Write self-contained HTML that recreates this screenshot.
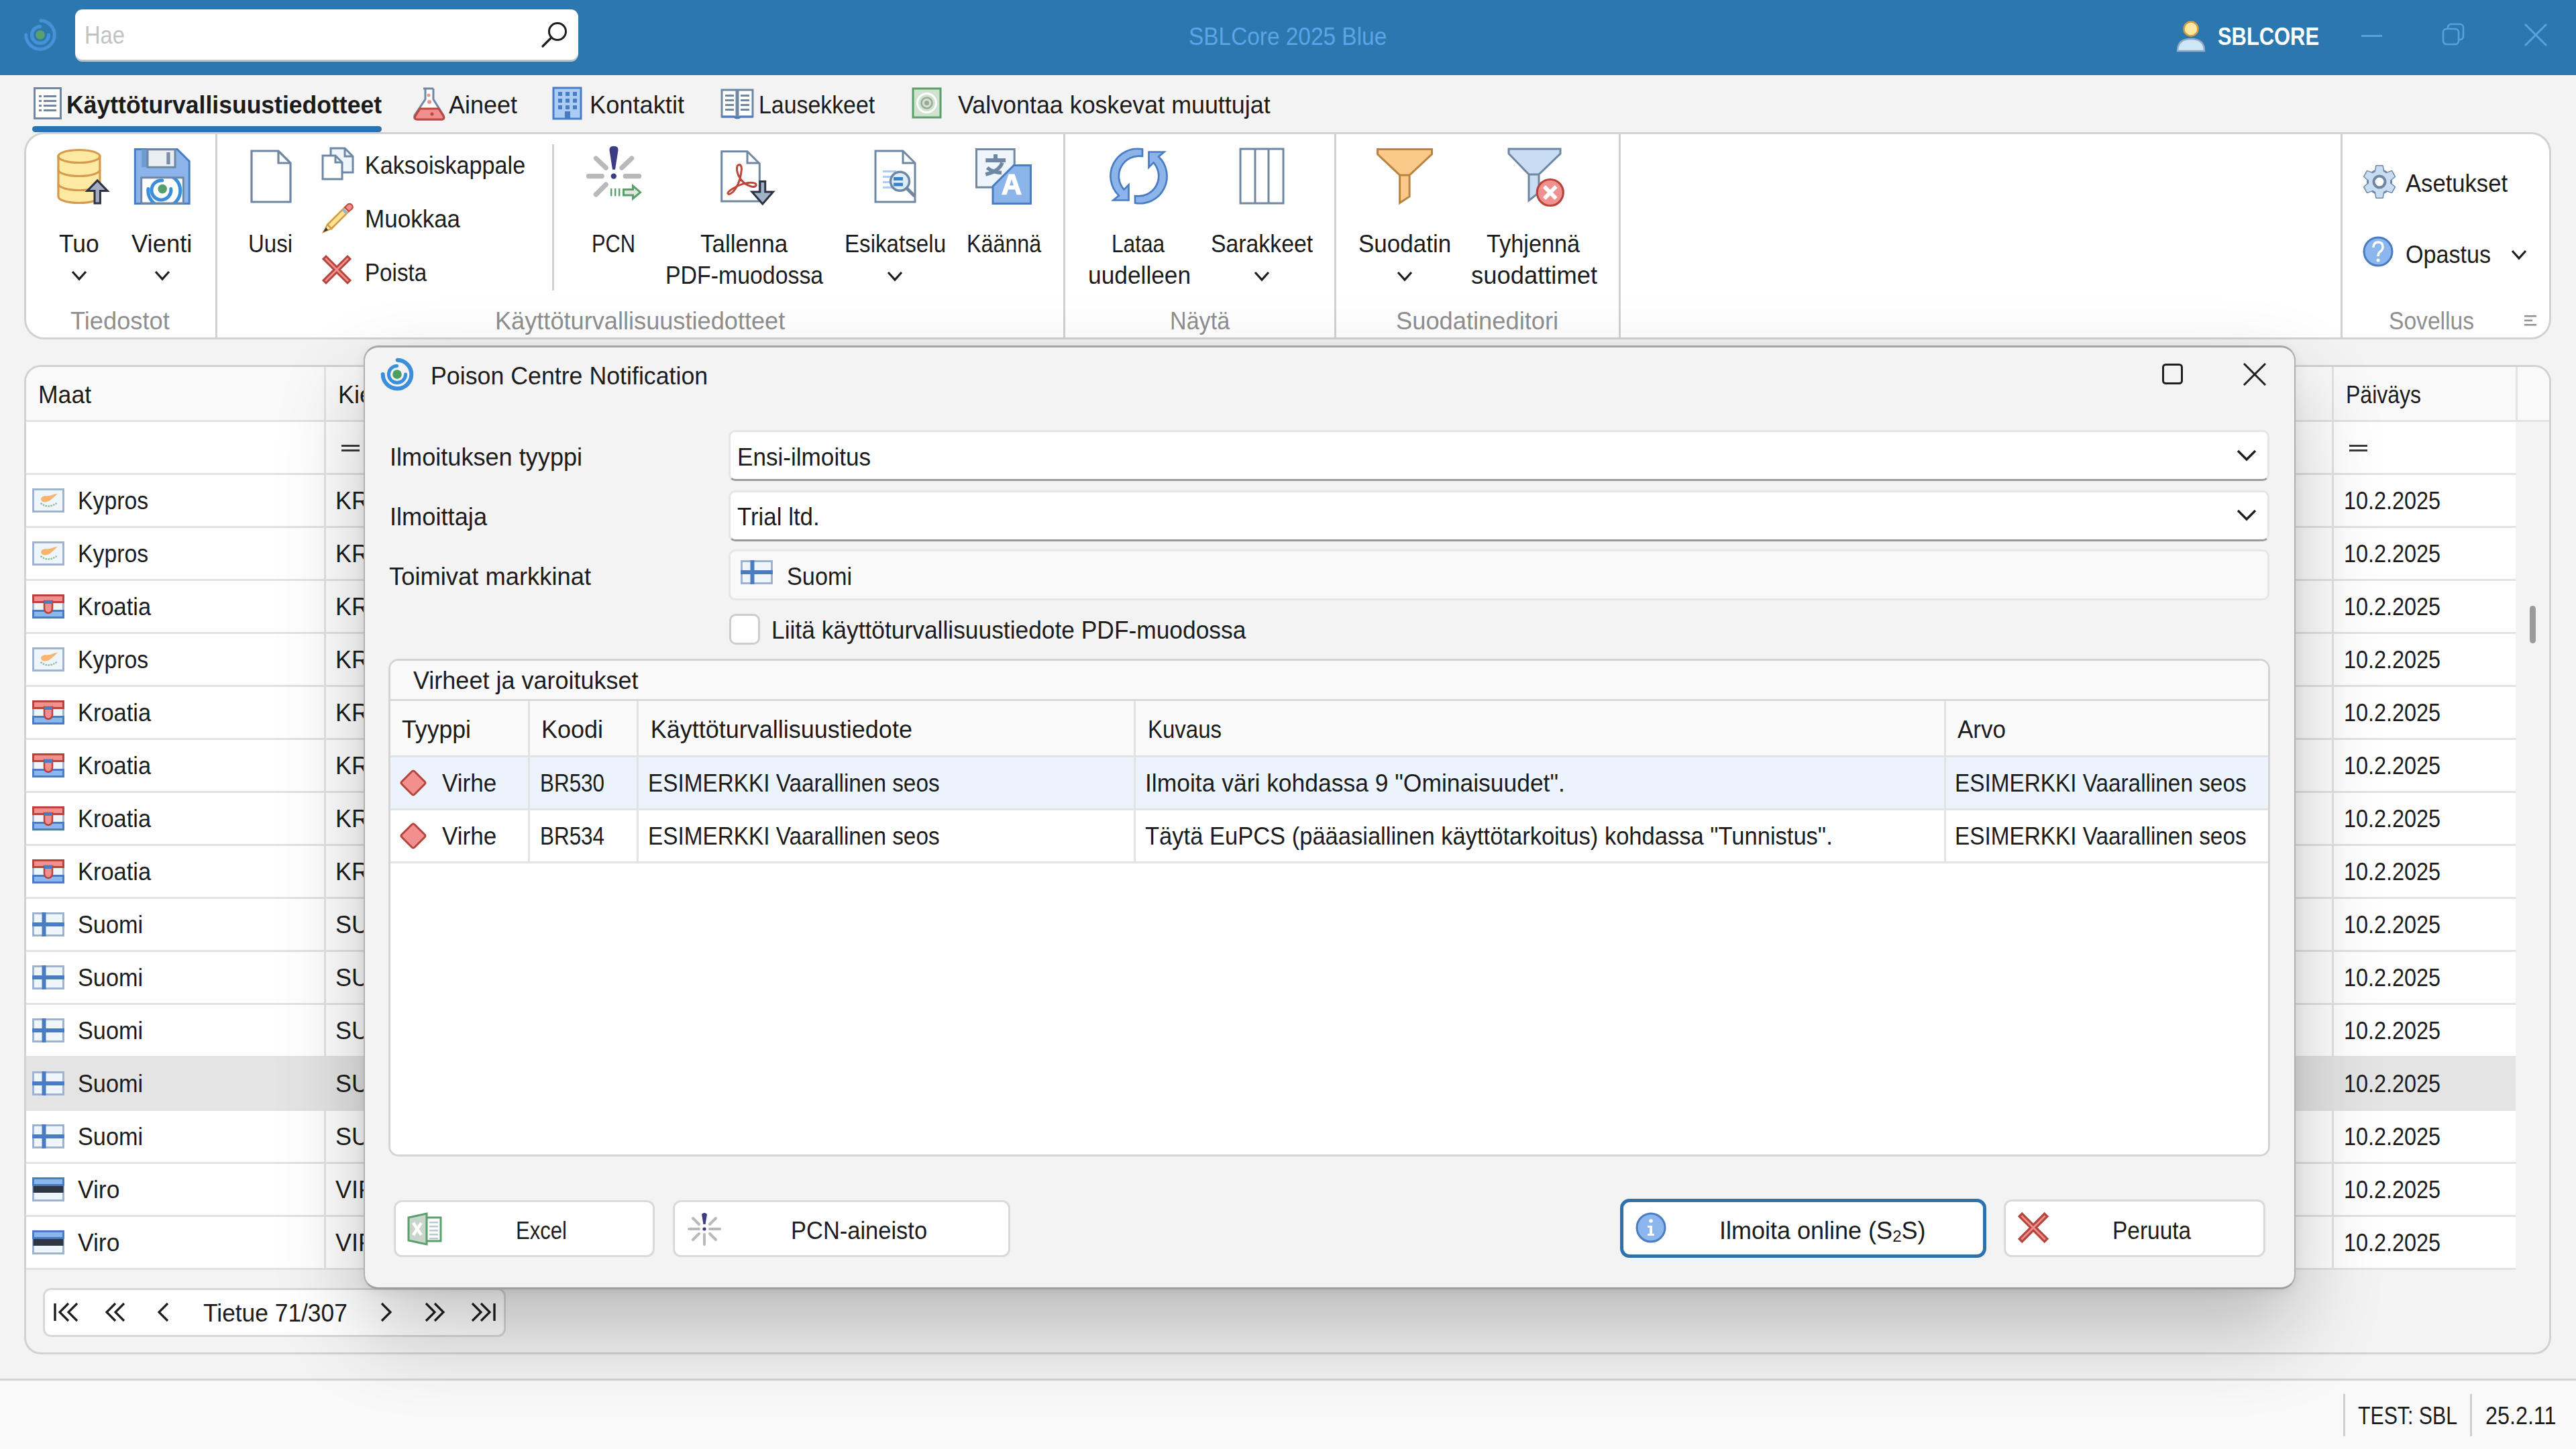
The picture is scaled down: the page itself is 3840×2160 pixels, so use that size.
<!DOCTYPE html><html><head><meta charset="utf-8"><style>
*{margin:0;padding:0;box-sizing:border-box}
html,body{width:3840px;height:2160px;overflow:hidden;background:#f3f3f3;font-family:"Liberation Sans",sans-serif}
.t{position:absolute;white-space:nowrap;line-height:1;transform-origin:0 0}
.r{position:absolute}
.s{position:absolute;overflow:visible}
</style></head><body><div class="r" style="left:0px;top:0px;width:3840px;height:112px;background:#2c78ae;"></div>
<svg class="s" style="left:0px;top:0px;" width="120" height="112" viewBox="0 0 120 112"><g opacity="1.0"><path d="M60.7 30.7 A21.3 21.3 0 1 1 38.7 52.0" fill="none" stroke="#4592d8" stroke-width="5" stroke-linecap="round"/><path d="M72.6 52.0 A12.6 12.6 0 1 1 59.6 39.4" fill="none" stroke="#4592d8" stroke-width="5" stroke-linecap="round"/><circle cx="60" cy="52" r="6.8" fill="#5aa06a"/></g></svg>
<div class="r" style="left:112px;top:14px;width:750px;height:75px;background:#ffffff;border-radius:11px;box-shadow:0 3px 0 #b9c3cc;"></div>
<div class="t" style="left:126.0px;top:33.7px;font-size:37px;color:#c2c2c2;transform:scaleX(0.8824);">Hae</div>
<svg class="s" style="left:800px;top:28px;" width="56" height="50" viewBox="0 0 56 50"><circle cx="31" cy="19" r="12.5" fill="none" stroke="#1f1f1f" stroke-width="3"/><line x1="22" y1="28" x2="9" y2="41" stroke="#1f1f1f" stroke-width="3.2" stroke-linecap="round"/></svg>
<div class="t" style="left:1772.0px;top:36.5px;font-size:36px;color:#5ba4e8;transform:scaleX(0.9277);">SBLCore 2025 Blue</div>
<svg class="s" style="left:3240px;top:28px;" width="52" height="52" viewBox="0 0 52 52"><circle cx="26" cy="15" r="10.5" fill="#fde9a0" stroke="#d49a45" stroke-width="2.5"/><path d="M6 48 Q6 30 26 30 Q46 30 46 48 Z" fill="#cfe6f7" stroke="#8fa9c8" stroke-width="2.5"/></svg>
<div class="t" style="left:3306.0px;top:36.5px;font-size:36px;color:#ffffff;font-weight:700;transform:scaleX(0.8580);">SBLCORE</div>
<div class="r" style="left:3520px;top:52px;width:31px;height:3px;background:#5aa0e0;"></div>
<svg class="s" style="left:3640px;top:34px;" width="36" height="36" viewBox="0 0 36 36"><rect x="2" y="9" width="23" height="23" rx="5" fill="none" stroke="#5aa0e0" stroke-width="2.6"/><path d="M9 9 V7 a5 5 0 0 1 5 -5 H27 a5 5 0 0 1 5 5 V20 a5 5 0 0 1 -5 5 H25" fill="none" stroke="#5aa0e0" stroke-width="2.6"/></svg>
<svg class="s" style="left:3762px;top:34px;" width="36" height="36" viewBox="0 0 36 36"><path d="M2 2 L34 34 M34 2 L2 34" stroke="#5aa0e0" stroke-width="3"/></svg>
<svg class="s" style="left:48px;top:128px;" width="48" height="52" viewBox="0 0 48 52"><rect x="3.5" y="3.5" width="39" height="45" fill="#fff" stroke="#6f87a3" stroke-width="3"/><g fill="#6f87a3"><rect x="10" y="14" width="4" height="3"/><rect x="17" y="14" width="19" height="3"/><rect x="10" y="21" width="4" height="3"/><rect x="17" y="21" width="19" height="3"/><rect x="10" y="28" width="4" height="3"/><rect x="17" y="28" width="19" height="3"/><rect x="10" y="35" width="4" height="3"/><rect x="17" y="35" width="19" height="3"/></g></svg>
<div class="t" style="left:99.0px;top:138.5px;font-size:36px;color:#1b1b1b;font-weight:700;transform:scaleX(0.9874);">Käyttöturvallisuustiedotteet</div>
<div class="r" style="left:48px;top:188px;width:521px;height:9px;background:#2c72ae;border-radius:5px"></div>
<svg class="s" style="left:612px;top:128px;" width="56" height="54" viewBox="0 0 56 54"><path d="M19 4 H34 M22 4 V20 L6 44 Q4 50 10 50 H46 Q52 50 49 44 L34 20 V4" fill="#fff" stroke="#6f87a3" stroke-width="3"/><path d="M14 34 H42 L49 45 Q51 50 46 50 H10 Q5 50 7 45 Z" fill="#f08f8f" stroke="#c0453a" stroke-width="3"/><circle cx="27" cy="14" r="2.5" fill="#f08f8f"/><circle cx="28" cy="24" r="3" fill="#f08f8f"/><circle cx="32" cy="42" r="2.5" fill="#c0453a"/></svg>
<div class="t" style="left:669.0px;top:138.5px;font-size:36px;color:#1b1b1b;">Aineet</div>
<svg class="s" style="left:822px;top:128px;" width="48" height="52" viewBox="0 0 48 52"><rect x="3" y="3" width="41" height="46" fill="#a9cdf5" stroke="#4a7cc4" stroke-width="3"/><g fill="#4a7cc4"><rect x="10" y="9" width="6" height="6"/><rect x="21" y="9" width="6" height="6"/><rect x="32" y="9" width="6" height="6"/><rect x="10" y="19" width="6" height="6"/><rect x="21" y="19" width="6" height="6"/><rect x="32" y="19" width="6" height="6"/><rect x="10" y="29" width="6" height="6"/><rect x="21" y="29" width="6" height="6"/><rect x="32" y="29" width="6" height="6"/><rect x="20" y="38" width="8" height="11"/></g></svg>
<div class="t" style="left:879.0px;top:138.5px;font-size:36px;color:#1b1b1b;transform:scaleX(1.0071);">Kontaktit</div>
<svg class="s" style="left:1072px;top:130px;" width="56" height="50" viewBox="0 0 56 50"><path d="M4 4 H26 V44 H4 Z M28 4 H50 V44 H28 Z" fill="#fff" stroke="#6f87a3" stroke-width="3"/><path d="M4 44 H22 Q27 48 32 44 H50" fill="none" stroke="#4a7cc4" stroke-width="3"/><g fill="#6f87a3"><rect x="9" y="11" width="13" height="3"/><rect x="9" y="18" width="13" height="3"/><rect x="9" y="25" width="13" height="3"/><rect x="9" y="32" width="13" height="3"/><rect x="32" y="11" width="13" height="3"/><rect x="32" y="18" width="13" height="3"/><rect x="32" y="25" width="13" height="3"/><rect x="32" y="32" width="13" height="3"/></g></svg>
<div class="t" style="left:1131.0px;top:138.5px;font-size:36px;color:#1b1b1b;transform:scaleX(0.9402);">Lausekkeet</div>
<svg class="s" style="left:1358px;top:128px;" width="48" height="52" viewBox="0 0 48 52"><rect x="3" y="4" width="41" height="43" fill="#cfe3cf" stroke="#5aa06a" stroke-width="3"/><circle cx="23.5" cy="25.5" r="14" fill="none" stroke="#fff" stroke-width="3"/><circle cx="23.5" cy="25.5" r="8" fill="none" stroke="#9aa89a" stroke-width="2.5"/><circle cx="23.5" cy="25.5" r="3.5" fill="#9aa89a"/></svg>
<div class="t" style="left:1428.0px;top:138.5px;font-size:36px;color:#1b1b1b;transform:scaleX(0.9957);">Valvontaa koskevat muuttujat</div>
<div class="r" style="left:36px;top:197px;width:3767px;height:309px;background:#ffffff;border:3px solid #d2d2d2;border-radius:30px"></div>
<div class="r" style="left:321px;top:199px;width:3px;height:305px;background:#d2d2d2;"></div>
<div class="r" style="left:1585px;top:199px;width:3px;height:305px;background:#d2d2d2;"></div>
<div class="r" style="left:1989px;top:199px;width:3px;height:305px;background:#d2d2d2;"></div>
<div class="r" style="left:2413px;top:199px;width:3px;height:305px;background:#d2d2d2;"></div>
<div class="r" style="left:3489px;top:199px;width:3px;height:305px;background:#d2d2d2;"></div>
<div class="r" style="left:823px;top:215px;width:3px;height:218px;background:#d2d2d2;"></div>
<svg class="s" style="left:80px;top:214px;" width="90" height="96" viewBox="0 0 90 96"><g stroke="#d79a4c" stroke-width="3.2" fill="#fee9a3">
<path d="M6.9 19 V79 A31 9.5 0 0 0 68.9 79 V19 Z"/>
<ellipse cx="37.9" cy="19" rx="31" ry="9.5"/></g>
<g stroke="#d79a4c" stroke-width="3.2" fill="none"><path d="M6.9 39 A31 9.5 0 0 0 68.9 39"/><path d="M6.9 60 A31 9.5 0 0 0 68.9 60"/></g>
<path d="M65.2 55 L80.3 70.6 H69.4 V89 H61 V70.6 H50 Z" fill="#a3adbf" stroke="#2b3242" stroke-width="3"/></svg>
<div class="t" style="left:88.0px;top:345.5px;font-size:36px;color:#1c1c1c;transform:scaleX(0.9836);">Tuo</div>
<svg class="s" style="left:105.0px;top:401.5px;" width="26" height="17" viewBox="0 0 26 17"><path d="M3 3 L13.0 14 L23 3" fill="none" stroke="#1f1f1f" stroke-width="3.2"/></svg>
<svg class="s" style="left:80px;top:214px;" width="210" height="96" viewBox="0 0 210 96"><defs><clipPath id="flc"><rect x="132" y="52" width="60" height="36"/></clipPath></defs>
<path d="M121.3 8.4 H184.2 L202.2 26.4 V89.4 H121.3 Z" fill="#8ab4ea" stroke="#4a7cc4" stroke-width="3"/>
<rect x="131" y="8.8" width="8" height="26.5" fill="#6f9bd0"/>
<rect x="140" y="8.8" width="41" height="26.5" fill="#e8eef2" stroke="#6f87a3" stroke-width="3"/>
<rect x="168.3" y="13" width="5.3" height="18" fill="#7a8ea8"/>
<rect x="130.7" y="50.8" width="62.6" height="38.2" fill="#fff" stroke="#6f87a3" stroke-width="3"/>
<g clip-path="url(#flc)"><g opacity="1.0"><path d="M162.9 46.3 A24 24 0 1 1 140.9 67.6" fill="none" stroke="#3a8edb" stroke-width="5" stroke-linecap="round"/><path d="M174.8 67.6 A14.5 14.5 0 1 1 161.8 55.0" fill="none" stroke="#3a8edb" stroke-width="5" stroke-linecap="round"/><circle cx="162.2" cy="67.6" r="6.8" fill="#55a06a"/></g></g></svg>
<div class="t" style="left:196.0px;top:345.5px;font-size:36px;color:#1c1c1c;transform:scaleX(1.0112);">Vienti</div>
<svg class="s" style="left:229.0px;top:401.5px;" width="26" height="17" viewBox="0 0 26 17"><path d="M3 3 L13.0 14 L23 3" fill="none" stroke="#1f1f1f" stroke-width="3.2"/></svg>
<svg class="s" style="left:372px;top:222px;" width="64" height="84" viewBox="0 0 64 84"><path d="M3 3 H43 L61 21 V79 H3 Z" fill="#fff" stroke="#6f87a3" stroke-width="3.2"/><path d="M43 3 V21 H61" fill="none" stroke="#6f87a3" stroke-width="3.2"/></svg>
<div class="t" style="left:370.0px;top:345.5px;font-size:36px;color:#1c1c1c;transform:scaleX(0.9167);">Uusi</div>
<svg class="s" style="left:478px;top:218px;" width="52" height="52" viewBox="0 0 52 52"><path d="M15 3 H36 L48 15 V39 H15 Z" fill="#eef5fb" stroke="#6f87a3" stroke-width="3"/><path d="M36 3 V15 H48" fill="none" stroke="#6f87a3" stroke-width="3"/><path d="M3 14 H22 L32 24 V49 H3 Z" fill="#fff" stroke="#6f87a3" stroke-width="3"/><path d="M22 14 V24 H32" fill="none" stroke="#6f87a3" stroke-width="3"/></svg>
<div class="t" style="left:544.0px;top:229.0px;font-size:36px;color:#1c1c1c;transform:scaleX(0.9484);">Kaksoiskappale</div>
<svg class="s" style="left:478px;top:300px;" width="50" height="50" viewBox="0 0 50 50"><path d="M10 35 L36 9 L42 15 L16 41 Z" fill="#fde28f" stroke="#d39a3c" stroke-width="2.5"/><path d="M36 9 L40 5 Q44 2 47 6 Q49 9 46 12 L42 15 Z" fill="#f08f8f" stroke="#c0453a" stroke-width="2"/><path d="M33 12 L39 18" stroke="#9ab3cf" stroke-width="4"/><path d="M10 35 L4 46 L16 41 Z" fill="#fbe3b5" stroke="#d39a3c" stroke-width="2"/><path d="M4 46 L8 39 L11 43 Z" fill="#2b3242"/></svg>
<div class="t" style="left:544.0px;top:308.5px;font-size:36px;color:#1c1c1c;transform:scaleX(0.9728);">Muokkaa</div>
<svg class="s" style="left:480px;top:380px;" width="46" height="46" viewBox="0 0 46 46"><g transform="scale(1.0)"><path d="M6 2 L22 18 L38 2 L42 6 L26 22 L42 38 L38 42 L22 26 L6 42 L2 38 L18 22 L2 6 Z" fill="#ef8f8f" stroke="#b8433a" stroke-width="3" stroke-linejoin="miter"/></g></svg>
<div class="t" style="left:544.0px;top:388.5px;font-size:36px;color:#1c1c1c;transform:scaleX(0.9208);">Poista</div>
<svg class="s" style="left:860px;top:210px;" width="110" height="100" viewBox="0 0 110 100"><g stroke="#b9b9bd" stroke-width="7.2" stroke-linecap="round">
<line x1="28.4" y1="26" x2="43.2" y2="40.2"/><line x1="81.7" y1="26" x2="66.9" y2="40.2"/>
<line x1="17.4" y1="52.6" x2="37.3" y2="52.6"/><line x1="72.2" y1="52.6" x2="92.7" y2="52.6"/>
<line x1="43.2" y1="65.1" x2="28.4" y2="79.9"/></g>
<path d="M48.5 14 Q48 7.8 55 7.8 Q62 7.8 61.5 14 L57 42.7 H53 Z" fill="#3b3b86"/><circle cx="54.8" cy="52.6" r="4.2" fill="#3b3b86"/>
<g fill="#5aa06a"><rect x="50" y="71" width="2.4" height="11.4"/><rect x="56" y="71" width="2.4" height="11.4"/><rect x="62" y="71" width="2.4" height="11.4"/></g>
<path d="M69.5 72.5 H83.5 V67 L94.5 76.7 L83.5 86 V81 H69.5 Z" fill="#dfe9df" stroke="#5aa06a" stroke-width="3"/></svg>
<div class="t" style="left:882.0px;top:345.5px;font-size:36px;color:#1c1c1c;transform:scaleX(0.8553);">PCN</div>
<svg class="s" style="left:1060px;top:210px;" width="110" height="100" viewBox="0 0 110 100"><path d="M15.7 15.7 H54 L72.3 34 V90 H15.7 Z" fill="#fff" stroke="#6f87a3" stroke-width="3"/><path d="M54 15.7 V33 H72.3" fill="none" stroke="#6f87a3" stroke-width="3"/>
<path d="M41.9 35.5 C37 35.5 38 46 41 52 C45 60 52 66 60 68 C66 70 69 66 66 63.5 C62 61 50 62 40 67 C32 71 24 76 25 78.5 C26 81 32 78 36 72 C40 66 44 55 45 46 C46 40 45 35.5 41.9 35.5 Z" fill="none" stroke="#c0453a" stroke-width="3"/>
<path d="M72.9 60.5 H80.7 V76 H92.5 L76.8 94 L61 76 H72.9 Z" fill="#a4b2c8" stroke="#2b3242" stroke-width="3"/></svg>
<div class="t" style="left:1044.0px;top:345.5px;font-size:36px;color:#1c1c1c;transform:scaleX(0.9704);">Tallenna</div>
<div class="t" style="left:992.0px;top:393.0px;font-size:36px;color:#1c1c1c;transform:scaleX(0.9402);">PDF-muodossa</div>
<svg class="s" style="left:1302px;top:222px;" width="66" height="84" viewBox="0 0 66 84"><path d="M3 3 H44 L62 21 V79 H3 Z" fill="#fff" stroke="#6f87a3" stroke-width="3"/><path d="M44 3 V21 H62" fill="none" stroke="#6f87a3" stroke-width="3"/>
<g fill="#a9cdf5"><rect x="14" y="32" width="20" height="3"/><rect x="14" y="40" width="20" height="3"/><rect x="14" y="48" width="20" height="3"/><rect x="14" y="56" width="20" height="3"/></g>
<circle cx="39.5" cy="48.3" r="14" fill="#ddeefa" stroke="#6f87a3" stroke-width="3.5"/>
<rect x="30" y="42" width="14" height="5" fill="#3a7ec4"/><rect x="30" y="50.5" width="14" height="5" fill="#3a7ec4"/>
<line x1="50" y1="59" x2="60" y2="69" stroke="#6f87a3" stroke-width="5" stroke-linecap="round"/></svg>
<div class="t" style="left:1259.0px;top:345.5px;font-size:36px;color:#1c1c1c;transform:scaleX(0.9207);">Esikatselu</div>
<svg class="s" style="left:1321.0px;top:402.5px;" width="26" height="17" viewBox="0 0 26 17"><path d="M3 3 L13.0 14 L23 3" fill="none" stroke="#1f1f1f" stroke-width="3.2"/></svg>
<svg class="s" style="left:1452px;top:219px;" width="88" height="88" viewBox="0 0 88 88"><rect x="3.5" y="3.5" width="56.7" height="56.7" fill="#eef6fb" stroke="#6f87a3" stroke-width="3"/>
<g fill="#6f87a3"><rect x="29" y="11" width="6" height="7"/><rect x="17.3" y="17" width="29.7" height="6"/></g>
<g stroke="#6f87a3" stroke-width="5.5" fill="none"><path d="M42 23.5 Q38 36 17.3 41"/><path d="M19.5 31 Q28 38 41 38.5"/></g>
<path d="M59.2 27.5 H84.5 V84.5 H28 V58.7 Z" fill="#8ab4ea" stroke="#4a7cc4" stroke-width="3"/>
<path d="M41 71.3 L51.5 40.5 H60.5 L71 71.3 H63.5 L61 63.5 H51 L48.5 71.3 Z M53 57.5 H59 L56 48 Z" fill="#fff" fill-rule="evenodd"/></svg>
<div class="t" style="left:1441.0px;top:345.5px;font-size:36px;color:#1c1c1c;transform:scaleX(0.8960);">Käännä</div>
<div class="t" style="left:105.0px;top:460.5px;font-size:36px;color:#8f8f8f;transform:scaleX(1.0068);">Tiedostot</div>
<div class="t" style="left:738.0px;top:460.5px;font-size:36px;color:#8f8f8f;transform:scaleX(1.0047);">Käyttöturvallisuustiedotteet</div>
<svg class="s" style="left:1650px;top:214px;" width="96" height="96" viewBox="0 0 96 96"><g fill="#8ab4ea" stroke="#4a7cc4" stroke-width="2.7" stroke-linejoin="miter"><path d="M53 8.4 A40.5 40.5 0 0 0 17.9 77.5 L9.6 84.5 L32.5 84.5 L32.5 61.6 L25.5 68.6 A30 30 0 0 1 53 19 Z"/><path d="M42 88.6 A40.5 40.5 0 0 0 77.1 19.5 L85.4 12.5 L62.5 12.5 L62.5 35.4 L69.5 28.4 A30 30 0 0 1 42 78 Z"/></g></svg>
<div class="t" style="left:1657.0px;top:345.5px;font-size:36px;color:#1c1c1c;transform:scaleX(0.8791);">Lataa</div>
<div class="t" style="left:1622.0px;top:393.0px;font-size:36px;color:#1c1c1c;transform:scaleX(0.9808);">uudelleen</div>
<svg class="s" style="left:1846px;top:219px;" width="70" height="88" viewBox="0 0 70 88"><rect x="3" y="3" width="64" height="81" fill="#fff" stroke="#6f87a3" stroke-width="3"/><line x1="25" y1="3" x2="25" y2="84" stroke="#6f87a3" stroke-width="3"/><line x1="45" y1="3" x2="45" y2="84" stroke="#6f87a3" stroke-width="3"/></svg>
<div class="t" style="left:1805.0px;top:345.5px;font-size:36px;color:#1c1c1c;transform:scaleX(0.9383);">Sarakkeet</div>
<svg class="s" style="left:1868.0px;top:402.5px;" width="26" height="17" viewBox="0 0 26 17"><path d="M3 3 L13.0 14 L23 3" fill="none" stroke="#1f1f1f" stroke-width="3.2"/></svg>
<svg class="s" style="left:2050px;top:219px;" width="88" height="88" viewBox="0 0 88 88"><path d="M3.5 3.5 H84.5 V10.9 L51.1 42.1 V74 L36.6 83.5 V42.1 L3.5 10.9 Z" fill="#fbc98a" stroke="#b98340" stroke-width="3"/><path d="M36.6 42.1 H51.1" stroke="#b98340" stroke-width="3"/></svg>
<div class="t" style="left:2025.0px;top:345.5px;font-size:36px;color:#1c1c1c;transform:scaleX(0.9718);">Suodatin</div>
<svg class="s" style="left:2081.0px;top:402.5px;" width="26" height="17" viewBox="0 0 26 17"><path d="M3 3 L13.0 14 L23 3" fill="none" stroke="#1f1f1f" stroke-width="3.2"/></svg>
<svg class="s" style="left:2246px;top:219px;" width="90" height="90" viewBox="0 0 90 90"><path d="M3 3 H80 V10 L48 41 V68 L33 80 V41 L3 10 Z" fill="#c8dcf2" stroke="#6f87a3" stroke-width="3"/><path d="M33 41 H48" stroke="#6f87a3" stroke-width="3"/><circle cx="64.8" cy="68" r="19.5" fill="#f29090" stroke="#b8433a" stroke-width="3.2"/><path d="M56 59 L73.6 77 M73.6 59 L56 77" stroke="#fff" stroke-width="6"/></svg>
<div class="t" style="left:2216.0px;top:345.5px;font-size:36px;color:#1c1c1c;transform:scaleX(0.9524);">Tyhjennä</div>
<div class="t" style="left:2193.0px;top:393.0px;font-size:36px;color:#1c1c1c;transform:scaleX(1.0108);">suodattimet</div>
<div class="t" style="left:1744.0px;top:460.5px;font-size:36px;color:#8f8f8f;transform:scaleX(0.9474);">Näytä</div>
<div class="t" style="left:2081.0px;top:460.5px;font-size:36px;color:#8f8f8f;transform:scaleX(1.0083);">Suodatineditori</div>
<svg class="s" style="left:3522px;top:246px;" width="50" height="52" viewBox="0 0 50 52"><g transform="translate(25,25)"><g fill="#c8dcf2" stroke="#6f87a3" stroke-width="3" stroke-linejoin="round"><path d="M-4.5 -23.5 H4.5 L6 -15 H-6 Z" transform="rotate(0)"/><path d="M-4.5 -23.5 H4.5 L6 -15 H-6 Z" transform="rotate(60)"/><path d="M-4.5 -23.5 H4.5 L6 -15 H-6 Z" transform="rotate(120)"/><path d="M-4.5 -23.5 H4.5 L6 -15 H-6 Z" transform="rotate(180)"/><path d="M-4.5 -23.5 H4.5 L6 -15 H-6 Z" transform="rotate(240)"/><path d="M-4.5 -23.5 H4.5 L6 -15 H-6 Z" transform="rotate(300)"/><circle r="17.5"/></g><g fill="#c8dcf2"><path d="M-4.5 -23.5 H4.5 L6 -15 H-6 Z" transform="rotate(0)"/><path d="M-4.5 -23.5 H4.5 L6 -15 H-6 Z" transform="rotate(60)"/><path d="M-4.5 -23.5 H4.5 L6 -15 H-6 Z" transform="rotate(120)"/><path d="M-4.5 -23.5 H4.5 L6 -15 H-6 Z" transform="rotate(180)"/><path d="M-4.5 -23.5 H4.5 L6 -15 H-6 Z" transform="rotate(240)"/><path d="M-4.5 -23.5 H4.5 L6 -15 H-6 Z" transform="rotate(300)"/></g><circle r="16" fill="#c8dcf2"/><circle r="8.5" fill="#fff" stroke="#6f87a3" stroke-width="4"/></g></svg>
<div class="t" style="left:3586.0px;top:255.5px;font-size:36px;color:#1c1c1c;transform:scaleX(0.9620);">Asetukset</div>
<svg class="s" style="left:3521px;top:351px;" width="48" height="48" viewBox="0 0 48 48"><circle cx="24" cy="24" r="21" fill="#8bb6ee" stroke="#4a7cc4" stroke-width="3"/><path d="M17 18 Q17 10 24 10 Q31 10 31 17 Q31 22 26 25 Q24 27 24 31" fill="none" stroke="#fff" stroke-width="3.5"/><circle cx="24" cy="37" r="2.5" fill="#fff"/></svg>
<div class="t" style="left:3586.0px;top:361.5px;font-size:36px;color:#1c1c1c;transform:scaleX(0.9478);">Opastus</div>
<svg class="s" style="left:3742.0px;top:370.5px;" width="26" height="17" viewBox="0 0 26 17"><path d="M3 3 L13.0 14 L23 3" fill="none" stroke="#1f1f1f" stroke-width="3.2"/></svg>
<div class="t" style="left:3561.0px;top:461.0px;font-size:36px;color:#8f8f8f;transform:scaleX(0.9338);">Sovellus</div>
<svg class="s" style="left:3761px;top:468px;" width="22" height="20" viewBox="0 0 22 20"><g fill="#8f8f8f"><rect x="2" y="2" width="18" height="2.5"/><rect x="2" y="8.5" width="12" height="2.5"/><rect x="2" y="15" width="18" height="2.5"/></g></svg>
<div class="r" style="left:36px;top:544px;width:3767px;height:1475px;background:#f3f3f3;border:3px solid #d2d2d2;border-radius:25px"></div>
<div class="r" style="left:39px;top:547px;width:3761px;height:80px;background:#f9f9f9;border-radius:22px 22px 0 0"></div>
<div class="r" style="left:39px;top:626px;width:3711px;height:3px;background:#e3e3e3;"></div>
<div class="r" style="left:3750px;top:626px;width:50px;height:3px;background:#e3e3e3;"></div>
<div class="r" style="left:39px;top:629px;width:3711px;height:76px;background:#ffffff;"></div>
<div class="r" style="left:39px;top:705px;width:3711px;height:3px;background:#e3e3e3;"></div>
<div class="r" style="left:39px;top:708px;width:3711px;height:76px;background:#ffffff;"></div>
<div class="r" style="left:39px;top:784px;width:3711px;height:3px;background:#e3e3e3;"></div>
<svg class="s" style="left:48px;top:728px;" width="48" height="36" viewBox="0 0 48 36"><rect x="1.5" y="1.5" width="45" height="33" fill="#eef6fb" stroke="#9fb2d0" stroke-width="3"/><path d="M13 15.5 Q15 10.5 22 11.5 Q29 10.5 32 9 L38 7.5 Q34 12 30 15 Q26 19.5 20 20.5 Q13.5 21 13 15.5 Z" fill="#f6b46e"/><path d="M12.5 22 Q24 31 36.5 22" fill="none" stroke="#8fb89a" stroke-width="2.4" stroke-dasharray="2.5 1.5"/></svg>
<div class="t" style="left:116.0px;top:729.0px;font-size:36px;color:#1c1c1c;transform:scaleX(0.9375);">Kypros</div>
<div class="t" style="left:500.0px;top:729.0px;font-size:36px;color:#1c1c1c;">KREIKKA</div>
<div class="t" style="left:3494.0px;top:728.5px;font-size:36px;color:#1c1c1c;transform:scaleX(0.9000);">10.2.2025</div>
<div class="r" style="left:39px;top:787px;width:3711px;height:76px;background:#ffffff;"></div>
<div class="r" style="left:39px;top:863px;width:3711px;height:3px;background:#e3e3e3;"></div>
<svg class="s" style="left:48px;top:807px;" width="48" height="36" viewBox="0 0 48 36"><rect x="1.5" y="1.5" width="45" height="33" fill="#eef6fb" stroke="#9fb2d0" stroke-width="3"/><path d="M13 15.5 Q15 10.5 22 11.5 Q29 10.5 32 9 L38 7.5 Q34 12 30 15 Q26 19.5 20 20.5 Q13.5 21 13 15.5 Z" fill="#f6b46e"/><path d="M12.5 22 Q24 31 36.5 22" fill="none" stroke="#8fb89a" stroke-width="2.4" stroke-dasharray="2.5 1.5"/></svg>
<div class="t" style="left:116.0px;top:808.0px;font-size:36px;color:#1c1c1c;transform:scaleX(0.9375);">Kypros</div>
<div class="t" style="left:500.0px;top:808.0px;font-size:36px;color:#1c1c1c;">KREIKKA</div>
<div class="t" style="left:3494.0px;top:807.5px;font-size:36px;color:#1c1c1c;transform:scaleX(0.9000);">10.2.2025</div>
<div class="r" style="left:39px;top:866px;width:3711px;height:76px;background:#ffffff;"></div>
<div class="r" style="left:39px;top:942px;width:3711px;height:3px;background:#e3e3e3;"></div>
<svg class="s" style="left:48px;top:886px;" width="48" height="36" viewBox="0 0 48 36"><rect x="1.5" y="1.5" width="45" height="33" fill="#eef6fb" stroke="#9fb2d0" stroke-width="3"/><rect x="1.5" y="1.5" width="45" height="10" fill="#f29090" stroke="#b8433a" stroke-width="3"/><rect x="1.5" y="24.5" width="45" height="10" fill="#8bb6ee" stroke="#4a7cc4" stroke-width="3"/><path d="M18 10 H30 V21 Q30 27 24 28 Q18 27 18 21 Z" fill="#f08f8f" stroke="#b8433a" stroke-width="2.5"/><rect x="18" y="9" width="12" height="5" fill="#4a7cc4"/></svg>
<div class="t" style="left:116.0px;top:887.0px;font-size:36px;color:#1c1c1c;transform:scaleX(0.9565);">Kroatia</div>
<div class="t" style="left:500.0px;top:887.0px;font-size:36px;color:#1c1c1c;">KROATIA</div>
<div class="t" style="left:3494.0px;top:886.5px;font-size:36px;color:#1c1c1c;transform:scaleX(0.9000);">10.2.2025</div>
<div class="r" style="left:39px;top:945px;width:3711px;height:76px;background:#ffffff;"></div>
<div class="r" style="left:39px;top:1021px;width:3711px;height:3px;background:#e3e3e3;"></div>
<svg class="s" style="left:48px;top:965px;" width="48" height="36" viewBox="0 0 48 36"><rect x="1.5" y="1.5" width="45" height="33" fill="#eef6fb" stroke="#9fb2d0" stroke-width="3"/><path d="M13 15.5 Q15 10.5 22 11.5 Q29 10.5 32 9 L38 7.5 Q34 12 30 15 Q26 19.5 20 20.5 Q13.5 21 13 15.5 Z" fill="#f6b46e"/><path d="M12.5 22 Q24 31 36.5 22" fill="none" stroke="#8fb89a" stroke-width="2.4" stroke-dasharray="2.5 1.5"/></svg>
<div class="t" style="left:116.0px;top:966.0px;font-size:36px;color:#1c1c1c;transform:scaleX(0.9375);">Kypros</div>
<div class="t" style="left:500.0px;top:966.0px;font-size:36px;color:#1c1c1c;">KREIKKA</div>
<div class="t" style="left:3494.0px;top:965.5px;font-size:36px;color:#1c1c1c;transform:scaleX(0.9000);">10.2.2025</div>
<div class="r" style="left:39px;top:1024px;width:3711px;height:76px;background:#ffffff;"></div>
<div class="r" style="left:39px;top:1100px;width:3711px;height:3px;background:#e3e3e3;"></div>
<svg class="s" style="left:48px;top:1044px;" width="48" height="36" viewBox="0 0 48 36"><rect x="1.5" y="1.5" width="45" height="33" fill="#eef6fb" stroke="#9fb2d0" stroke-width="3"/><rect x="1.5" y="1.5" width="45" height="10" fill="#f29090" stroke="#b8433a" stroke-width="3"/><rect x="1.5" y="24.5" width="45" height="10" fill="#8bb6ee" stroke="#4a7cc4" stroke-width="3"/><path d="M18 10 H30 V21 Q30 27 24 28 Q18 27 18 21 Z" fill="#f08f8f" stroke="#b8433a" stroke-width="2.5"/><rect x="18" y="9" width="12" height="5" fill="#4a7cc4"/></svg>
<div class="t" style="left:116.0px;top:1045.0px;font-size:36px;color:#1c1c1c;transform:scaleX(0.9565);">Kroatia</div>
<div class="t" style="left:500.0px;top:1045.0px;font-size:36px;color:#1c1c1c;">KROATIA</div>
<div class="t" style="left:3494.0px;top:1044.5px;font-size:36px;color:#1c1c1c;transform:scaleX(0.9000);">10.2.2025</div>
<div class="r" style="left:39px;top:1103px;width:3711px;height:76px;background:#ffffff;"></div>
<div class="r" style="left:39px;top:1179px;width:3711px;height:3px;background:#e3e3e3;"></div>
<svg class="s" style="left:48px;top:1123px;" width="48" height="36" viewBox="0 0 48 36"><rect x="1.5" y="1.5" width="45" height="33" fill="#eef6fb" stroke="#9fb2d0" stroke-width="3"/><rect x="1.5" y="1.5" width="45" height="10" fill="#f29090" stroke="#b8433a" stroke-width="3"/><rect x="1.5" y="24.5" width="45" height="10" fill="#8bb6ee" stroke="#4a7cc4" stroke-width="3"/><path d="M18 10 H30 V21 Q30 27 24 28 Q18 27 18 21 Z" fill="#f08f8f" stroke="#b8433a" stroke-width="2.5"/><rect x="18" y="9" width="12" height="5" fill="#4a7cc4"/></svg>
<div class="t" style="left:116.0px;top:1124.0px;font-size:36px;color:#1c1c1c;transform:scaleX(0.9565);">Kroatia</div>
<div class="t" style="left:500.0px;top:1124.0px;font-size:36px;color:#1c1c1c;">KROATIA</div>
<div class="t" style="left:3494.0px;top:1123.5px;font-size:36px;color:#1c1c1c;transform:scaleX(0.9000);">10.2.2025</div>
<div class="r" style="left:39px;top:1182px;width:3711px;height:76px;background:#ffffff;"></div>
<div class="r" style="left:39px;top:1258px;width:3711px;height:3px;background:#e3e3e3;"></div>
<svg class="s" style="left:48px;top:1202px;" width="48" height="36" viewBox="0 0 48 36"><rect x="1.5" y="1.5" width="45" height="33" fill="#eef6fb" stroke="#9fb2d0" stroke-width="3"/><rect x="1.5" y="1.5" width="45" height="10" fill="#f29090" stroke="#b8433a" stroke-width="3"/><rect x="1.5" y="24.5" width="45" height="10" fill="#8bb6ee" stroke="#4a7cc4" stroke-width="3"/><path d="M18 10 H30 V21 Q30 27 24 28 Q18 27 18 21 Z" fill="#f08f8f" stroke="#b8433a" stroke-width="2.5"/><rect x="18" y="9" width="12" height="5" fill="#4a7cc4"/></svg>
<div class="t" style="left:116.0px;top:1203.0px;font-size:36px;color:#1c1c1c;transform:scaleX(0.9565);">Kroatia</div>
<div class="t" style="left:500.0px;top:1203.0px;font-size:36px;color:#1c1c1c;">KROATIA</div>
<div class="t" style="left:3494.0px;top:1202.5px;font-size:36px;color:#1c1c1c;transform:scaleX(0.9000);">10.2.2025</div>
<div class="r" style="left:39px;top:1261px;width:3711px;height:76px;background:#ffffff;"></div>
<div class="r" style="left:39px;top:1337px;width:3711px;height:3px;background:#e3e3e3;"></div>
<svg class="s" style="left:48px;top:1281px;" width="48" height="36" viewBox="0 0 48 36"><rect x="1.5" y="1.5" width="45" height="33" fill="#eef6fb" stroke="#9fb2d0" stroke-width="3"/><rect x="1.5" y="1.5" width="45" height="10" fill="#f29090" stroke="#b8433a" stroke-width="3"/><rect x="1.5" y="24.5" width="45" height="10" fill="#8bb6ee" stroke="#4a7cc4" stroke-width="3"/><path d="M18 10 H30 V21 Q30 27 24 28 Q18 27 18 21 Z" fill="#f08f8f" stroke="#b8433a" stroke-width="2.5"/><rect x="18" y="9" width="12" height="5" fill="#4a7cc4"/></svg>
<div class="t" style="left:116.0px;top:1282.0px;font-size:36px;color:#1c1c1c;transform:scaleX(0.9565);">Kroatia</div>
<div class="t" style="left:500.0px;top:1282.0px;font-size:36px;color:#1c1c1c;">KROATIA</div>
<div class="t" style="left:3494.0px;top:1281.5px;font-size:36px;color:#1c1c1c;transform:scaleX(0.9000);">10.2.2025</div>
<div class="r" style="left:39px;top:1340px;width:3711px;height:76px;background:#ffffff;"></div>
<div class="r" style="left:39px;top:1416px;width:3711px;height:3px;background:#e3e3e3;"></div>
<svg class="s" style="left:48px;top:1360px;" width="48" height="36" viewBox="0 0 48 36"><rect x="1.5" y="1.5" width="45" height="33" fill="#eef6fb" stroke="#9fb2d0" stroke-width="3"/><rect x="14.5" y="0" width="6" height="36" fill="#4a7cc4"/><rect x="0" y="15" width="48" height="6" fill="#4a7cc4"/></svg>
<div class="t" style="left:116.0px;top:1361.0px;font-size:36px;color:#1c1c1c;transform:scaleX(0.9510);">Suomi</div>
<div class="t" style="left:500.0px;top:1361.0px;font-size:36px;color:#1c1c1c;">SUOMI</div>
<div class="t" style="left:3494.0px;top:1360.5px;font-size:36px;color:#1c1c1c;transform:scaleX(0.9000);">10.2.2025</div>
<div class="r" style="left:39px;top:1419px;width:3711px;height:76px;background:#ffffff;"></div>
<div class="r" style="left:39px;top:1495px;width:3711px;height:3px;background:#e3e3e3;"></div>
<svg class="s" style="left:48px;top:1439px;" width="48" height="36" viewBox="0 0 48 36"><rect x="1.5" y="1.5" width="45" height="33" fill="#eef6fb" stroke="#9fb2d0" stroke-width="3"/><rect x="14.5" y="0" width="6" height="36" fill="#4a7cc4"/><rect x="0" y="15" width="48" height="6" fill="#4a7cc4"/></svg>
<div class="t" style="left:116.0px;top:1440.0px;font-size:36px;color:#1c1c1c;transform:scaleX(0.9510);">Suomi</div>
<div class="t" style="left:500.0px;top:1440.0px;font-size:36px;color:#1c1c1c;">SUOMI</div>
<div class="t" style="left:3494.0px;top:1439.5px;font-size:36px;color:#1c1c1c;transform:scaleX(0.9000);">10.2.2025</div>
<div class="r" style="left:39px;top:1498px;width:3711px;height:76px;background:#ffffff;"></div>
<div class="r" style="left:39px;top:1574px;width:3711px;height:3px;background:#e3e3e3;"></div>
<svg class="s" style="left:48px;top:1518px;" width="48" height="36" viewBox="0 0 48 36"><rect x="1.5" y="1.5" width="45" height="33" fill="#eef6fb" stroke="#9fb2d0" stroke-width="3"/><rect x="14.5" y="0" width="6" height="36" fill="#4a7cc4"/><rect x="0" y="15" width="48" height="6" fill="#4a7cc4"/></svg>
<div class="t" style="left:116.0px;top:1519.0px;font-size:36px;color:#1c1c1c;transform:scaleX(0.9510);">Suomi</div>
<div class="t" style="left:500.0px;top:1519.0px;font-size:36px;color:#1c1c1c;">SUOMI</div>
<div class="t" style="left:3494.0px;top:1518.5px;font-size:36px;color:#1c1c1c;transform:scaleX(0.9000);">10.2.2025</div>
<div class="r" style="left:39px;top:1577px;width:3711px;height:76px;background:#e4e4e4;"></div>
<div class="r" style="left:39px;top:1653px;width:3711px;height:3px;background:#e3e3e3;"></div>
<svg class="s" style="left:48px;top:1597px;" width="48" height="36" viewBox="0 0 48 36"><rect x="1.5" y="1.5" width="45" height="33" fill="#eef6fb" stroke="#9fb2d0" stroke-width="3"/><rect x="14.5" y="0" width="6" height="36" fill="#4a7cc4"/><rect x="0" y="15" width="48" height="6" fill="#4a7cc4"/></svg>
<div class="t" style="left:116.0px;top:1598.0px;font-size:36px;color:#1c1c1c;transform:scaleX(0.9510);">Suomi</div>
<div class="t" style="left:500.0px;top:1598.0px;font-size:36px;color:#1c1c1c;">SUOMI</div>
<div class="t" style="left:3494.0px;top:1597.5px;font-size:36px;color:#1c1c1c;transform:scaleX(0.9000);">10.2.2025</div>
<div class="r" style="left:39px;top:1656px;width:3711px;height:76px;background:#ffffff;"></div>
<div class="r" style="left:39px;top:1732px;width:3711px;height:3px;background:#e3e3e3;"></div>
<svg class="s" style="left:48px;top:1676px;" width="48" height="36" viewBox="0 0 48 36"><rect x="1.5" y="1.5" width="45" height="33" fill="#eef6fb" stroke="#9fb2d0" stroke-width="3"/><rect x="14.5" y="0" width="6" height="36" fill="#4a7cc4"/><rect x="0" y="15" width="48" height="6" fill="#4a7cc4"/></svg>
<div class="t" style="left:116.0px;top:1677.0px;font-size:36px;color:#1c1c1c;transform:scaleX(0.9510);">Suomi</div>
<div class="t" style="left:500.0px;top:1677.0px;font-size:36px;color:#1c1c1c;">SUOMI</div>
<div class="t" style="left:3494.0px;top:1676.5px;font-size:36px;color:#1c1c1c;transform:scaleX(0.9000);">10.2.2025</div>
<div class="r" style="left:39px;top:1735px;width:3711px;height:76px;background:#ffffff;"></div>
<div class="r" style="left:39px;top:1811px;width:3711px;height:3px;background:#e3e3e3;"></div>
<svg class="s" style="left:48px;top:1755px;" width="48" height="36" viewBox="0 0 48 36"><rect x="1.5" y="1.5" width="45" height="33" fill="#eef6fb" stroke="#9fb2d0" stroke-width="3"/><rect x="1.5" y="1.5" width="45" height="10" fill="#8bb6ee" stroke="#4a7cc4" stroke-width="3"/><rect x="1.5" y="13" width="45" height="10" fill="#2e3644"/></svg>
<div class="t" style="left:116.0px;top:1756.0px;font-size:36px;color:#1c1c1c;transform:scaleX(0.9841);">Viro</div>
<div class="t" style="left:500.0px;top:1756.0px;font-size:36px;color:#1c1c1c;">VIRO</div>
<div class="t" style="left:3494.0px;top:1755.5px;font-size:36px;color:#1c1c1c;transform:scaleX(0.9000);">10.2.2025</div>
<div class="r" style="left:39px;top:1814px;width:3711px;height:76px;background:#ffffff;"></div>
<div class="r" style="left:39px;top:1890px;width:3711px;height:3px;background:#e3e3e3;"></div>
<svg class="s" style="left:48px;top:1834px;" width="48" height="36" viewBox="0 0 48 36"><rect x="1.5" y="1.5" width="45" height="33" fill="#eef6fb" stroke="#9fb2d0" stroke-width="3"/><rect x="1.5" y="1.5" width="45" height="10" fill="#8bb6ee" stroke="#4a7cc4" stroke-width="3"/><rect x="1.5" y="13" width="45" height="10" fill="#2e3644"/></svg>
<div class="t" style="left:116.0px;top:1835.0px;font-size:36px;color:#1c1c1c;transform:scaleX(0.9841);">Viro</div>
<div class="t" style="left:500.0px;top:1835.0px;font-size:36px;color:#1c1c1c;">VIRO</div>
<div class="t" style="left:3494.0px;top:1834.5px;font-size:36px;color:#1c1c1c;transform:scaleX(0.9000);">10.2.2025</div>
<div class="r" style="left:483px;top:547px;width:3px;height:1345px;background:#e3e3e3;"></div>
<div class="r" style="left:3476px;top:547px;width:3px;height:1345px;background:#e3e3e3;"></div>
<div class="r" style="left:3750px;top:547px;width:3px;height:80px;background:#e3e3e3;"></div>
<div class="r" style="left:39px;top:1577px;width:3711px;height:76px;background:#e4e4e4;"></div>
<svg class="s" style="left:48px;top:1597px;" width="48" height="36" viewBox="0 0 48 36"><rect x="1.5" y="1.5" width="45" height="33" fill="#eef6fb" stroke="#9fb2d0" stroke-width="3"/><rect x="14.5" y="0" width="6" height="36" fill="#4a7cc4"/><rect x="0" y="15" width="48" height="6" fill="#4a7cc4"/></svg>
<div class="t" style="left:116.0px;top:1598.0px;font-size:36px;color:#1c1c1c;transform:scaleX(0.9510);">Suomi</div>
<div class="t" style="left:500.0px;top:1598.0px;font-size:36px;color:#1c1c1c;">SUOMI</div>
<div class="t" style="left:3494.0px;top:1597.5px;font-size:36px;color:#1c1c1c;transform:scaleX(0.9000);">10.2.2025</div>
<div class="t" style="left:57.0px;top:570.5px;font-size:36px;color:#1c1c1c;transform:scaleX(0.9875);">Maat</div>
<div class="t" style="left:504.0px;top:570.5px;font-size:36px;color:#1c1c1c;">Kieli</div>
<div class="t" style="left:3497.0px;top:570.5px;font-size:36px;color:#1c1c1c;transform:scaleX(0.8889);">Päiväys</div>
<svg class="s" style="left:507px;top:661px;" width="32" height="14" viewBox="0 0 32 14"><rect x="2" y="2" width="27" height="3" fill="#3a3a3a"/><rect x="2" y="9" width="27" height="3" fill="#3a3a3a"/></svg>
<svg class="s" style="left:3500px;top:661px;" width="32" height="14" viewBox="0 0 32 14"><rect x="2" y="2" width="27" height="3" fill="#3a3a3a"/><rect x="2" y="9" width="27" height="3" fill="#3a3a3a"/></svg>
<div class="r" style="left:3771px;top:903px;width:9px;height:56px;background:#9b9b9b;border-radius:5px"></div>
<div class="r" style="left:64px;top:1920px;width:690px;height:73px;background:#ffffff;border:3px solid #d8d8d8;border-radius:12px"></div>
<svg class="s" style="left:78px;top:1940px;" width="42" height="32" viewBox="0 0 42 32"><line x1="4" y1="3" x2="4" y2="29" stroke="#1f1f1f" stroke-width="3.4"/><path d="M24 3 L11 16 L24 29 M37 3 L24 16 L37 29" fill="none" stroke="#1f1f1f" stroke-width="3.2"/></svg>
<svg class="s" style="left:156px;top:1940px;" width="34" height="32" viewBox="0 0 34 32"><path d="M16 3 L3 16 L16 29 M29 3 L16 16 L29 29" fill="none" stroke="#1f1f1f" stroke-width="3.2"/></svg>
<svg class="s" style="left:233px;top:1940px;" width="24" height="32" viewBox="0 0 24 32"><path d="M17 3 L4 16 L17 29" fill="none" stroke="#1f1f1f" stroke-width="3.2"/></svg>
<div class="t" style="left:303.0px;top:1939.5px;font-size:36px;color:#1c1c1c;transform:scaleX(0.9817);">Tietue 71/307</div>
<svg class="s" style="left:565px;top:1940px;" width="24" height="32" viewBox="0 0 24 32"><path d="M4 3 L17 16 L4 29" fill="none" stroke="#1f1f1f" stroke-width="3.2"/></svg>
<svg class="s" style="left:631px;top:1940px;" width="34" height="32" viewBox="0 0 34 32"><path d="M4 3 L17 16 L4 29 M17 3 L30 16 L17 29" fill="none" stroke="#1f1f1f" stroke-width="3.2"/></svg>
<svg class="s" style="left:700px;top:1940px;" width="42" height="32" viewBox="0 0 42 32"><path d="M4 3 L17 16 L4 29 M17 3 L30 16 L17 29" fill="none" stroke="#1f1f1f" stroke-width="3.2"/><line x1="37" y1="3" x2="37" y2="29" stroke="#1f1f1f" stroke-width="3.4"/></svg>
<div class="r" style="left:0px;top:2055px;width:3840px;height:3px;background:#d2d2d2;"></div>
<div class="r" style="left:0px;top:2058px;width:3840px;height:102px;background:#f9f9f9;"></div>
<div class="r" style="left:3493px;top:2078px;width:3px;height:63px;background:#cfcfcf;"></div>
<div class="r" style="left:3682px;top:2078px;width:3px;height:63px;background:#cfcfcf;"></div>
<div class="t" style="left:3515.0px;top:2093.1px;font-size:36px;color:#1c1c1c;transform:scaleX(0.8409);">TEST: SBL</div>
<div class="t" style="left:3705.0px;top:2093.1px;font-size:36px;color:#1c1c1c;transform:scaleX(0.8974);">25.2.11</div>
<div class="r" style="left:542px;top:515px;width:2880px;height:1407px;background:#f3f3f3;border:2px solid #b0b0b0;border-top:3px solid #a6a6a6;border-bottom:3px solid #9e9e9e;border-radius:22px;box-shadow:0 60px 130px rgba(0,0,0,0.24),0 4px 16px rgba(0,0,0,0.07)"></div>
<svg class="s" style="left:560px;top:526px;" width="64" height="64" viewBox="0 0 64 64"><g opacity="1.0"><path d="M32.7 10.7 A21.3 21.3 0 1 1 10.7 32.0" fill="none" stroke="#3a8edb" stroke-width="6" stroke-linecap="round"/><path d="M44.6 32.0 A12.6 12.6 0 1 1 31.6 19.4" fill="none" stroke="#3a8edb" stroke-width="5" stroke-linecap="round"/><circle cx="32" cy="32" r="6.8" fill="#4aa062"/></g></svg>
<div class="t" style="left:642.0px;top:542.5px;font-size:36px;color:#1c1c1c;transform:scaleX(0.9928);">Poison Centre Notification</div>
<svg class="s" style="left:3222px;top:541px;" width="34" height="34" viewBox="0 0 34 34"><rect x="2.5" y="2.5" width="28" height="28" rx="4" fill="none" stroke="#1f1f1f" stroke-width="3"/></svg>
<svg class="s" style="left:3343px;top:540px;" width="36" height="36" viewBox="0 0 36 36"><path d="M2 2 L34 34 M34 2 L2 34" stroke="#1f1f1f" stroke-width="3"/></svg>
<div class="t" style="left:581.0px;top:663.5px;font-size:36px;color:#1c1c1c;transform:scaleX(1.0035);">Ilmoituksen tyyppi</div>
<div class="r" style="left:1086px;top:641px;width:2297px;height:76px;background:#ffffff;border:3px solid #e6e6e6;border-bottom:3px solid #9c9c9c;border-radius:10px"></div>
<div class="t" style="left:1099.0px;top:663.5px;font-size:36px;color:#1c1c1c;transform:scaleX(0.9755);">Ensi-ilmoitus</div>
<svg class="s" style="left:3333px;top:669px;" width="32" height="21" viewBox="0 0 32 21"><path d="M3 3 L16 16 L29 3" fill="none" stroke="#1f1f1f" stroke-width="3.4"/></svg>
<div class="t" style="left:581.0px;top:752.5px;font-size:36px;color:#1c1c1c;transform:scaleX(1.0069);">Ilmoittaja</div>
<div class="r" style="left:1086px;top:731px;width:2297px;height:76px;background:#ffffff;border:3px solid #e6e6e6;border-bottom:3px solid #9c9c9c;border-radius:10px"></div>
<div class="t" style="left:1099.0px;top:752.5px;font-size:36px;color:#1c1c1c;transform:scaleX(0.9685);">Trial ltd.</div>
<svg class="s" style="left:3333px;top:758px;" width="32" height="21" viewBox="0 0 32 21"><path d="M3 3 L16 16 L29 3" fill="none" stroke="#1f1f1f" stroke-width="3.4"/></svg>
<div class="t" style="left:580.0px;top:841.5px;font-size:36px;color:#1c1c1c;transform:scaleX(1.0101);">Toimivat markkinat</div>
<div class="r" style="left:1086px;top:819px;width:2297px;height:76px;background:#f9f9f9;border:3px solid #e6e6e6;border-radius:10px"></div>
<svg class="s" style="left:1104px;top:835px;" width="48" height="36" viewBox="0 0 48 36"><rect x="1.5" y="1.5" width="45" height="33" fill="#eef6fb" stroke="#9fb2d0" stroke-width="3"/><rect x="14.5" y="0" width="6" height="36" fill="#4a7cc4"/><rect x="0" y="15" width="48" height="6" fill="#4a7cc4"/></svg>
<div class="t" style="left:1173.0px;top:841.5px;font-size:36px;color:#1c1c1c;transform:scaleX(0.9510);">Suomi</div>
<div class="r" style="left:1087px;top:915px;width:46px;height:46px;background:#ffffff;border:3px solid #cdcdcd;border-radius:10px"></div>
<div class="t" style="left:1150.0px;top:922.3px;font-size:36px;color:#1c1c1c;transform:scaleX(0.9820);">Liitä käyttöturvallisuustiedote PDF-muodossa</div>
<div class="r" style="left:579px;top:982px;width:2805px;height:742px;background:#ffffff;border:3px solid #d4d4d4;border-radius:15px;overflow:hidden"></div>
<div class="r" style="left:582px;top:985px;width:2799px;height:57px;background:#f9f9f9;border-radius:12px 12px 0 0"></div>
<div class="r" style="left:582px;top:1042px;width:2799px;height:3px;background:#d9d9d9;"></div>
<div class="t" style="left:616.0px;top:996.5px;font-size:36px;color:#1c1c1c;">Virheet ja varoitukset</div>
<div class="r" style="left:582px;top:1045px;width:2799px;height:81px;background:#fafafa;"></div>
<div class="r" style="left:582px;top:1126px;width:2799px;height:3px;background:#e3e3e3;"></div>
<div class="r" style="left:582px;top:1129px;width:2799px;height:76px;background:#ebf3fd;"></div>
<div class="r" style="left:582px;top:1205px;width:2799px;height:3px;background:#e3e3e3;"></div>
<div class="r" style="left:582px;top:1284px;width:2799px;height:3px;background:#e3e3e3;"></div>
<div class="r" style="left:787px;top:1045px;width:3px;height:242px;background:#e3e3e3;"></div>
<div class="r" style="left:949px;top:1045px;width:3px;height:242px;background:#e3e3e3;"></div>
<div class="r" style="left:1690px;top:1045px;width:3px;height:242px;background:#e3e3e3;"></div>
<div class="r" style="left:2898px;top:1045px;width:3px;height:242px;background:#e3e3e3;"></div>
<div class="t" style="left:599.0px;top:1070.1px;font-size:36px;color:#1c1c1c;transform:scaleX(0.9904);">Tyyppi</div>
<div class="t" style="left:807.0px;top:1070.1px;font-size:36px;color:#1c1c1c;">Koodi</div>
<div class="t" style="left:969.7px;top:1070.1px;font-size:36px;color:#1c1c1c;">Käyttöturvallisuustiedote</div>
<div class="t" style="left:1710.6px;top:1070.1px;font-size:36px;color:#1c1c1c;transform:scaleX(0.9167);">Kuvaus</div>
<div class="t" style="left:2918.0px;top:1070.1px;font-size:36px;color:#1c1c1c;transform:scaleX(0.9730);">Arvo</div>
<svg class="s" style="left:592px;top:1147px;" width="48" height="40" viewBox="0 0 48 40"><path d="M22 3 Q24 1 26 3 L41 18 Q43 20 41 22 L26 37 Q24 39 22 37 L7 22 Q5 20 7 18 Z" fill="#f29090" stroke="#b8433a" stroke-width="3"/></svg>
<div class="t" style="left:658.6px;top:1149.5px;font-size:36px;color:#1c1c1c;transform:scaleX(0.9759);">Virhe</div>
<div class="t" style="left:804.7px;top:1149.5px;font-size:36px;color:#1c1c1c;transform:scaleX(0.8727);">BR530</div>
<div class="t" style="left:965.7px;top:1149.5px;font-size:36px;color:#1c1c1c;transform:scaleX(0.9255);">ESIMERKKI Vaarallinen seos</div>
<div class="t" style="left:1707.0px;top:1149.5px;font-size:36px;color:#1c1c1c;transform:scaleX(0.9843);">Ilmoita väri kohdassa 9 "Ominaisuudet".</div>
<div class="t" style="left:2914.0px;top:1149.5px;font-size:36px;color:#1c1c1c;transform:scaleX(0.9255);">ESIMERKKI Vaarallinen seos</div>
<svg class="s" style="left:592px;top:1226px;" width="48" height="40" viewBox="0 0 48 40"><path d="M22 3 Q24 1 26 3 L41 18 Q43 20 41 22 L26 37 Q24 39 22 37 L7 22 Q5 20 7 18 Z" fill="#f29090" stroke="#b8433a" stroke-width="3"/></svg>
<div class="t" style="left:658.6px;top:1228.5px;font-size:36px;color:#1c1c1c;transform:scaleX(0.9759);">Virhe</div>
<div class="t" style="left:804.7px;top:1228.5px;font-size:36px;color:#1c1c1c;transform:scaleX(0.8727);">BR534</div>
<div class="t" style="left:965.7px;top:1228.5px;font-size:36px;color:#1c1c1c;transform:scaleX(0.9255);">ESIMERKKI Vaarallinen seos</div>
<div class="t" style="left:1707.0px;top:1228.5px;font-size:36px;color:#1c1c1c;transform:scaleX(0.9588);">Täytä EuPCS (pääasiallinen käyttötarkoitus) kohdassa "Tunnistus".</div>
<div class="t" style="left:2914.0px;top:1228.5px;font-size:36px;color:#1c1c1c;transform:scaleX(0.9255);">ESIMERKKI Vaarallinen seos</div>
<div class="r" style="left:587px;top:1789px;width:389px;height:85px;background:#ffffff;border:3px solid #dadada;border-radius:12px"></div>
<svg class="s" style="left:606px;top:1806px;" width="54" height="52" viewBox="0 0 54 52"><path d="M30 9 H51 V44 H30" fill="#fff" stroke="#5aa06a" stroke-width="3"/><g fill="#b9c8d8"><rect x="34" y="15" width="13" height="2.5"/><rect x="34" y="21" width="13" height="2.5"/><rect x="34" y="27" width="13" height="2.5"/><rect x="34" y="33" width="13" height="2.5"/><rect x="34" y="39" width="13" height="2.5"/></g><path d="M3 9 L30 3 V49 L3 43 Z" fill="#c9d6cc" stroke="#5aa06a" stroke-width="3"/><path d="M10 17 L22 35 M22 17 L10 35" stroke="#fff" stroke-width="4.5"/></svg>
<div class="t" style="left:768.7px;top:1816.5px;font-size:36px;color:#1c1c1c;transform:scaleX(0.8636);">Excel</div>
<div class="r" style="left:1003px;top:1789px;width:503px;height:85px;background:#ffffff;border:3px solid #dadada;border-radius:12px"></div>
<svg class="s" style="left:1024px;top:1806px;" width="52" height="52" viewBox="0 0 52 52"><g stroke="#b9b9bd" stroke-width="4" stroke-linecap="round"><line x1="9" y1="10" x2="18" y2="19"/><line x1="43" y1="10" x2="34" y2="19"/><line x1="3" y1="26" x2="18" y2="26"/><line x1="34" y1="26" x2="49" y2="26"/><line x1="9" y1="42" x2="18" y2="33"/><line x1="43" y1="42" x2="34" y2="33"/><line x1="26" y1="34" x2="26" y2="49"/></g><path d="M22 4 Q26 0 30 4 L27.5 19 H24.5 Z" fill="#3b3b86"/><circle cx="26" cy="26" r="2.6" fill="#3b3b86"/></svg>
<div class="t" style="left:1178.6px;top:1816.5px;font-size:36px;color:#1c1c1c;transform:scaleX(0.9575);">PCN-aineisto</div>
<div class="r" style="left:2415px;top:1787px;width:546px;height:88px;background:#ffffff;border:5px solid #2d72ad;border-radius:14px"></div>
<svg class="s" style="left:2437px;top:1806px;" width="48" height="48" viewBox="0 0 48 48"><circle cx="24" cy="24" r="21" fill="#8bb6ee" stroke="#4a7cc4" stroke-width="3"/><circle cx="24" cy="14" r="2.8" fill="#fff"/><path d="M19 21 H26 V33 H29 V36 H19 V33 H22 V24 H19 Z" fill="#fff"/></svg>
<div class="t" style="left:2563px;top:1816.5px;font-size:36px;color:#1b1b1b">Ilmoita online (S<span style="font-size:24px;vertical-align:-4px">2</span>S)</div>
<div class="r" style="left:2987px;top:1788px;width:390px;height:86px;background:#ffffff;border:3px solid #dadada;border-radius:12px"></div>
<svg class="s" style="left:3008px;top:1807px;" width="48" height="48" viewBox="0 0 48 48"><g transform="scale(1.0454545454545454)"><path d="M6 2 L22 18 L38 2 L42 6 L26 22 L42 38 L38 42 L22 26 L6 42 L2 38 L18 22 L2 6 Z" fill="#ef8f8f" stroke="#b8433a" stroke-width="3" stroke-linejoin="miter"/></g></svg>
<div class="t" style="left:3149.0px;top:1816.5px;font-size:36px;color:#1c1c1c;transform:scaleX(0.9291);">Peruuta</div></body></html>
